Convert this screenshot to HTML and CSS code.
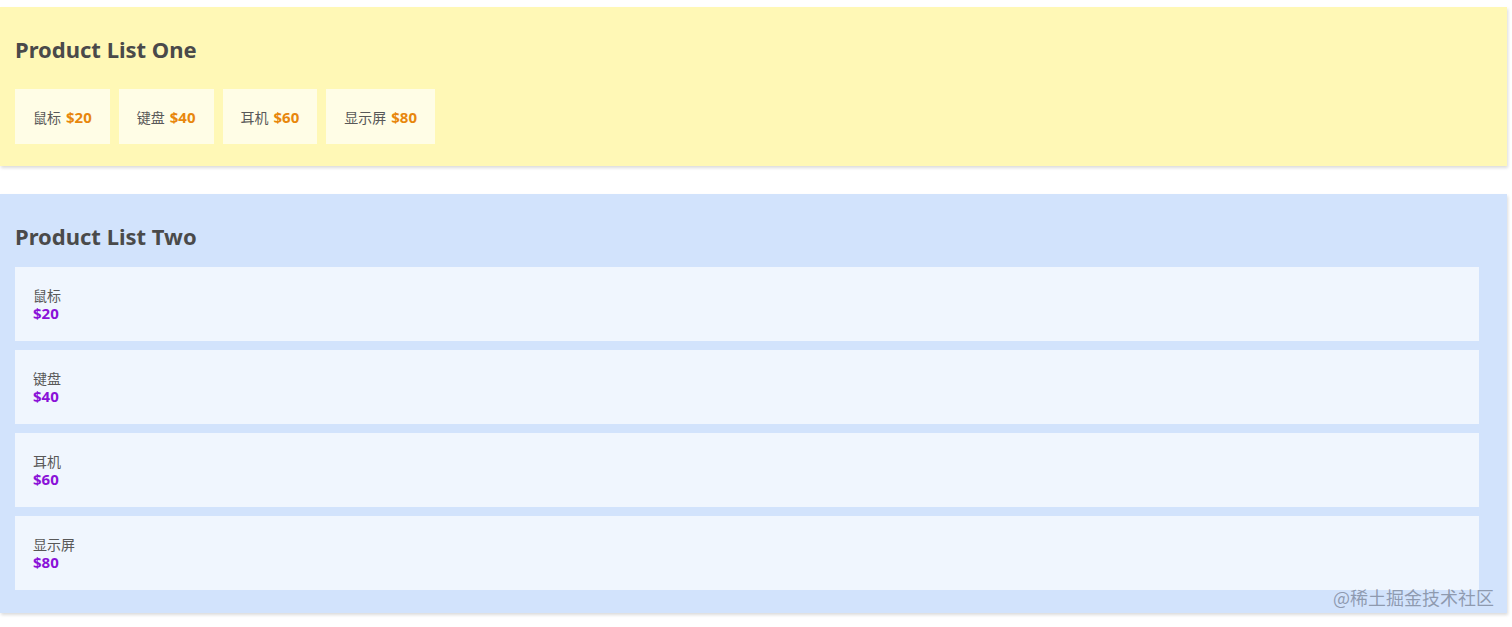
FILE: index.html
```html
<!DOCTYPE html>
<html lang="zh">
<head>
<meta charset="utf-8">
<title>Product Lists</title>
<link rel="stylesheet" href="styles.css">
</head>
<body>
<div class="page">
  <section class="panel panel-one">
    <h2 class="title">Product List One</h2>
    <ul class="list-one">
      <li class="card"><span class="name">鼠标</span> <span class="price">$20</span></li>
      <li class="card"><span class="name">键盘</span> <span class="price">$40</span></li>
      <li class="card"><span class="name">耳机</span> <span class="price">$60</span></li>
      <li class="card"><span class="name">显示屏</span> <span class="price">$80</span></li>
    </ul>
  </section>
  <section class="panel panel-two">
    <h2 class="title">Product List Two</h2>
    <ul class="list-two">
      <li class="row"><span class="name">鼠标</span><span class="price">$20</span></li>
      <li class="row"><span class="name">键盘</span><span class="price">$40</span></li>
      <li class="row"><span class="name">耳机</span><span class="price">$60</span></li>
      <li class="row"><span class="name">显示屏</span><span class="price">$80</span></li>
    </ul>
  </section>
  <div class="watermark">@稀土掘金技术社区</div>
</div>
</body>
</html>
```

FILE: styles.css
```css
html, body {
  margin: 0;
  padding: 0;
  background: #ffffff;
}
body {
  font-family: "Noto Sans", "Noto Sans CJK SC", sans-serif;
  color: #585858;
}
.page {
  position: relative;
  padding-top: 7px;
  width: 1512px;
  height: 620px;
}
.panel {
  width: 1507px;
  box-sizing: border-box;
  box-shadow: 1px 2px 3px rgba(0, 0, 0, 0.14);
}
.panel-one {
  background: #fff8b6;
  padding: 15px 28px 22px 15px;
}
.panel-two {
  margin-top: 28px;
  background: #d2e3fc;
  padding: 15px 28px 23px 15px;
}
.title {
  margin: 0;
  font-size: 22px;
  font-weight: 700;
  line-height: 26px;
  color: #4a4a4a;
}
.panel-one .title {
  margin: 14px 0 27px;
}
.panel-two .title {
  margin: 14px 0 18px;
}
ul {
  list-style: none;
  margin: 0;
  padding: 0;
}
.list-one {
  display: flex;
  gap: 9px;
}
.card {
  background: #fffde6;
  height: 55px;
  box-sizing: border-box;
  padding: 0 18px;
  display: flex;
  align-items: center;
  gap: 5px;
  white-space: nowrap;
}
.name {
  font-family: "Noto Sans CJK SC", sans-serif;
  font-size: 14px;
  color: #585858;
}
.card .price {
  font-size: 15px;
  font-weight: 700;
  color: #e8870c;
}
.list-two {
  display: flex;
  flex-direction: column;
  gap: 9px;
}
.row {
  background: #f0f6fe;
  height: 74px;
  box-sizing: border-box;
  padding: 19px 18px 18px;
  display: flex;
  flex-direction: column;
}
.row .name {
  line-height: 18px;
}
.row .price {
  font-size: 15px;
  line-height: 18px;
  font-weight: 700;
  color: #8a12d8;
}
.watermark {
  position: absolute;
  left: 1333px;
  top: 586px;
  font-family: "Noto Sans CJK SC", sans-serif;
  font-size: 18px;
  line-height: 22px;
  color: rgba(120, 130, 150, 0.75);
  white-space: nowrap;
}
```
